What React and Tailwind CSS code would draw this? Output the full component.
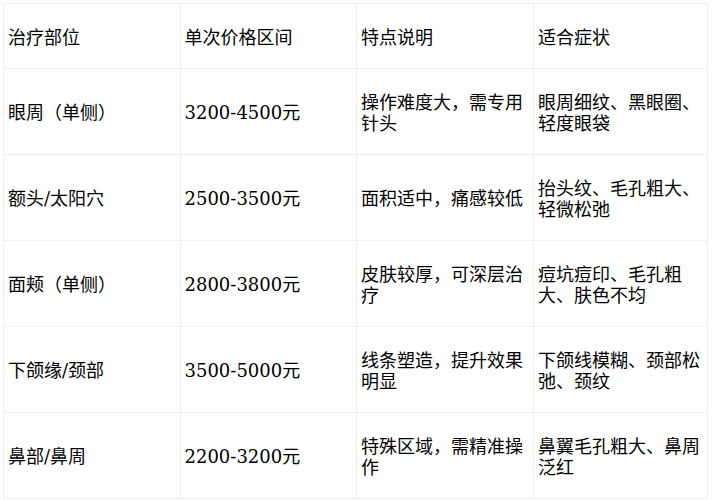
import React from "react";

const rows = [
  ["眼周（单侧）", "3200-4500元", "操作难度大，需专用针头", "眼周细纹、黑眼圈、轻度眼袋"],
  ["额头/太阳穴", "2500-3500元", "面积适中，痛感较低", "抬头纹、毛孔粗大、轻微松弛"],
  ["面颊（单侧）", "2800-3800元", "皮肤较厚，可深层治疗", "痘坑痘印、毛孔粗大、肤色不均"],
  ["下颌缘/颈部", "3500-5000元", "线条塑造，提升效果明显", "下颌线模糊、颈部松弛、颈纹"],
  ["鼻部/鼻周", "2200-3200元", "特殊区域，需精准操作", "鼻翼毛孔粗大、鼻周泛红"],
];

const headers = ["治疗部位", "单次价格区间", "特点说明", "适合症状"];

export default function App() {
  return (
    <div
      className="w-[714px] h-[500px] bg-white p-[3px] text-black text-[18px] leading-[21.5px]"
      style={{ fontFamily: '"DejaVu Serif", "Noto Sans CJK SC", serif' }}
    >
      <table className="w-[704px] table-fixed border-collapse">
        <colgroup>
          <col className="w-[176.5px]" />
          <col className="w-[176.5px]" />
          <col className="w-[177px]" />
          <col className="w-[174px]" />
        </colgroup>
        <thead>
          <tr className="h-[65px]">
            {headers.map((h) => (
              <th
                key={h}
                className="border border-[#efefef] px-[4px] pt-[3px] pb-0 text-left font-normal align-middle"
              >
                {h}
              </th>
            ))}
          </tr>
        </thead>
        <tbody>
          {rows.map((r) => (
            <tr key={r[0]} className="h-[86px]">
              {r.map((c, i) => (
                <td
                  key={i}
                  className="border border-[#efefef] px-[4px] pt-[3px] pb-0 align-middle"
                >
                  {c}
                </td>
              ))}
            </tr>
          ))}
        </tbody>
      </table>
    </div>
  );
}
